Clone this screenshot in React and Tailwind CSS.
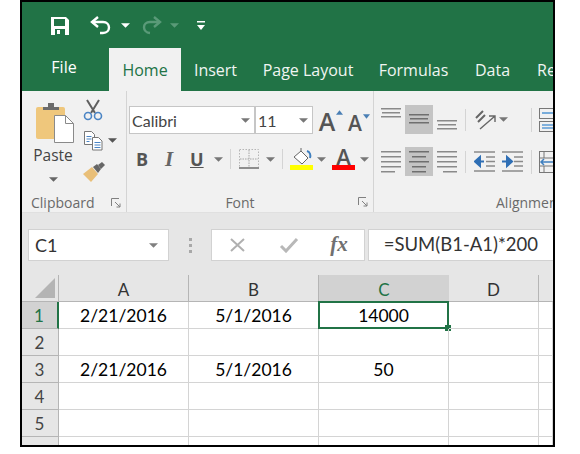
import React from "react";

const ui = "font-['Open_Sans','Noto_Sans',sans-serif]";
const cal = "font-['Lato','Noto_Sans',sans-serif]";

function Caret({ color = "#666", size = 4, className = "" }) {
  return (
    <svg width={size * 2 + 1} height={size + 1} viewBox="0 0 8 4" className={className}>
      <path d="M0 0h8L4 4z" fill={color} />
    </svg>
  );
}

function Lines({ rows, w = 20, h = 29, color = "#7f7f7f" }) {
  return (
    <svg width={w} height={h} viewBox={`0 0 ${w} ${h}`}>
      {rows.map(([x, y, l], i) => (
        <rect key={i} x={x} y={y} width={l} height="1.5" fill={color} />
      ))}
    </svg>
  );
}

function Paste() {
  return (
    <svg width="40" height="42" viewBox="0 0 40 42" className="ml-[4px]">
      <rect x="1" y="5" width="29" height="32" rx="2" fill="#efc77c" />
      <path d="M8 8V5h5V1h6v4h5v3z" fill="#6b6b6b" />
      <path d="M19.5 13.5h11l8 8v19h-19z" fill="#fff" stroke="#8a8a8a" />
      <path d="M30.5 13.5v8h8" fill="none" stroke="#8a8a8a" />
    </svg>
  );
}

function Scissors() {
  return (
    <svg width="20" height="22" viewBox="0 0 20 22" fill="none">
      <path d="M4 1l8 13M16 1L8 14" stroke="#5f5f5f" strokeWidth="2" />
      <circle cx="5" cy="17" r="3.5" stroke="#4a84c4" strokeWidth="1.6" />
      <circle cx="15" cy="17" r="3.5" stroke="#4a84c4" strokeWidth="1.6" />
    </svg>
  );
}

function Copy() {
  return (
    <svg width="20" height="21" viewBox="0 0 20 21" fill="none">
      <path d="M1.5 1.5h7l3 3v10h-10z" fill="#fff" stroke="#777" />
      <path d="M3.5 6.5h5M3.5 9h5M3.5 11.5h3" stroke="#4a84c4" />
      <path d="M9.5 7.5h6l3.5 3.5v9H9.5z" fill="#fff" stroke="#777" />
      <path d="M11.5 12.5h6M11.5 15h6M11.5 17.5h6" stroke="#4a84c4" />
    </svg>
  );
}

function Brush() {
  return (
    <svg width="22" height="20" viewBox="0 0 22 20">
      <path d="M0 12l9-7 6 7-7 8z" fill="#e9bf78" />
      <path d="M10 5l4-3 4 5-3 4z" fill="#666" />
      <path d="M15 3l4-3 3 3-4 4z" fill="#666" />
    </svg>
  );
}

function ExpandMark() {
  return (
    <svg width="10" height="10" viewBox="0 0 10 10" fill="none" stroke="#808080">
      <path d="M.5 8V.5H8" />
      <path d="M4 4l5 5M9 5.5V9H5.5" />
    </svg>
  );
}

function Sep({ h = "h-[30px]" }) {
  return <div className={`w-px ${h} bg-[#d4d4d4]`} />;
}

function Combo({ w, text }) {
  return (
    <div className={`${w} h-[28px] bg-white border border-[#c6c6c6] flex items-center justify-between pl-[2px] pr-[4px] ${cal} text-[16px] text-[#444]`}>
      <span className="pt-[1px]">{text}</span>
      <Caret color="#777" />
    </div>
  );
}

function BigA({ size, tri, up, w }) {
  return (
    <div className={`relative ${w} flex items-end justify-center ${ui} text-[#555] font-semibold leading-none`} style={{ fontSize: size }}>
      A
      <svg width="7" height="5" viewBox="0 0 8 5" className="absolute right-[-6px] top-[1px]">
        <path d={up ? "M0 5h8L4 0z" : "M0 0h8L4 5z"} fill={tri} />
      </svg>
    </div>
  );
}

function ClipboardGroup() {
  return (
    <div className="w-[104px] h-full shrink-0 flex flex-col">
      <div className="h-[101px] shrink-0 flex pl-[10px] pt-[11px]">
        <div className="w-[42px] flex flex-col items-center">
          <Paste />
          <div className={`${ui} text-[15.5px] text-[#444] leading-none mt-[4px]`}>Paste</div>
          <Caret className="mt-[13px]" color="#666" />
        </div>
        <div className="flex flex-col -mt-[3px] ml-[9px]">
          <Scissors />
          <div className="flex items-center mt-[9px]">
            <Copy />
            <Caret className="ml-[5px]" color="#555" />
          </div>
          <div className="mt-[11px]"><Brush /></div>
        </div>
      </div>
      <div className={`h-[20px] flex items-center justify-between pl-[9px] pr-[5px] pt-[1px] ${ui} text-[14px] text-[#6a6a6a]`}>
        <span>Clipboard</span>
        <ExpandMark />
      </div>
    </div>
  );
}

function FontGroup() {
  return (
    <div className="w-[247px] h-full shrink-0 flex flex-col border-l border-[#d4d4d4] pl-[2px]">
      <div className="h-[101px] shrink-0 flex flex-col pt-[15px]">
        <div className="flex items-center">
          <Combo w="w-[126px]" text="Calibri" />
          <Combo w="w-[58px]" text="11" />
          <div className="flex items-end h-[27px] ml-[4px]">
            <BigA size={25} tri="#4a7fb5" up w="w-[20px]" />
            <div className="w-[9px]" />
            <BigA size={21} tri="#4a7fb5" w="w-[18px]" />
          </div>
        </div>
        <div className="flex items-center h-[28px] mt-[11px] pl-[7px]">
          <span className={`w-[14px] ${ui} text-[18px] font-bold text-[#555] leading-none`}>B</span>
          <span className={`w-[14px] ml-[15px] font-['Liberation_Serif',serif] text-[21px] font-bold italic text-[#666] leading-none`}>I</span>
          <span className={`w-[16px] ml-[11px] ${ui} text-[18px] font-bold text-[#555] leading-none underline`}>U</span>
          <Caret className="ml-[8px]" color="#777" />
          <div className="ml-[7px]"><Sep h="h-[20px]" /></div>
          <svg width="20" height="21" viewBox="0 0 20 21" className="ml-[8px]" fill="none">
            <rect x=".5" y=".5" width="19" height="18" stroke="#b5b5b5" strokeDasharray="1.5 1.5" />
            <path d="M10 1v18M1 10h18" stroke="#a5a5a5" strokeDasharray="1.5 1" />
            <rect y="18" width="20" height="2" fill="#8f8f8f" />
          </svg>
          <Caret className="ml-[7px]" color="#777" />
          <div className="ml-[7px]"><Sep h="h-[20px]" /></div>
          <div className="ml-[7px] w-[23px] flex flex-col items-center">
            <svg width="20" height="17" viewBox="0 0 20 17" fill="none">
              <path d="M2 9l7-6 7 7-6 6z" fill="#fff" stroke="#666" />
              <path d="M9 3V0" stroke="#666" />
              <path d="M15 3c3 1 4 4 3 7" stroke="#3f7fbf" strokeWidth="2" />
            </svg>
            <div className="w-[23px] h-[5px] bg-[#ffff00]" />
          </div>
          <Caret className="ml-[4px]" color="#777" />
          <div className="ml-[6px] w-[23px] flex flex-col items-center">
            <span className={`${ui} text-[22px] h-[17px] leading-[17px] font-semibold text-[#555]`}>A</span>
            <div className="w-[23px] h-[5px] bg-[#ff0000]" />
          </div>
          <Caret className="ml-[5px]" color="#777" />
        </div>
      </div>
      <div className={`h-[20px] relative flex items-center justify-center pr-[22px] pt-[1px] ${ui} text-[14px] text-[#6a6a6a]`}>
        <span>Font</span>
        <span className="absolute right-[5px] top-[5px]"><ExpandMark /></span>
      </div>
    </div>
  );
}

function AlignBtn({ on, rows }) {
  return (
    <div className={`w-[28px] h-[29px] shrink-0 flex items-center justify-center ${on ? "bg-[#c4c4c4]" : ""}`}>
      <Lines rows={rows} color={on ? "#6f6f6f" : "#8a8a8a"} />
    </div>
  );
}

const v3 = (o) => [[0, o, 20], [1, o + 4, 18], [0, o + 8, 20]];
const left = [[0, 4, 20], [0, 9, 20], [0, 14, 20], [0, 19, 20], [0, 24, 14]];
const center = [[0, 4, 20], [3, 9, 14], [0, 14, 20], [3, 19, 14], [3, 24, 14]];
const right = [[0, 4, 20], [0, 9, 20], [0, 14, 20], [0, 19, 20], [6, 24, 14]];

function Indent({ flip }) {
  return (
    <svg width="22" height="21" viewBox="0 0 22 21" fill="none">
      <path d={flip ? "M0 10.5h6M5 6l5 4.5L5 15z" : "M10 10.5H4M6 6l-5 4.5L6 15z"} stroke="#2f6fb5" strokeWidth="2" fill="#2f6fb5" />
      <path d="M0 1h21M12 6h9M12 10.5h9M12 15h9M0 20h21" stroke="#8a8a8a" strokeWidth="1.5" />
    </svg>
  );
}

function AlignmentGroup() {
  return (
    <div className="flex-1 min-w-0 h-full flex flex-col border-l border-[#d4d4d4] overflow-hidden">
      <div className="h-[101px] shrink-0 flex flex-col pt-[14px] pl-[3px]">
        <div className="flex items-center">
          <AlignBtn rows={v3(3)} />
          <AlignBtn on rows={v3(9)} />
          <AlignBtn rows={v3(15)} />
          <div className="ml-[4px]"><Sep h="h-[22px]" /></div>
          <svg width="22" height="22" viewBox="0 0 22 22" className="ml-[9px]" fill="none">
            <path d="M1 9l7-7M3 13l7-7" stroke="#666" strokeWidth="2" />
            <path d="M5 20L20 7M14 7h6v6" stroke="#666" strokeWidth="1.4" />
          </svg>
          <Caret className="ml-[2px]" color="#777" />
          <div className="ml-[23px]"><Sep h="h-[24px]" /></div>
          <svg width="14" height="24" viewBox="0 0 14 24" className="ml-[7px]" fill="none">
            <rect x=".5" y=".5" width="14" height="10" stroke="#777" />
            <path d="M3 5h12" stroke="#5b9bd5" strokeWidth="1.6" />
            <rect x=".5" y="13.5" width="14" height="10" stroke="#777" />
            <path d="M3 17h12M3 20h12" stroke="#5b9bd5" strokeWidth="1.6" />
          </svg>
        </div>
        <div className="flex items-center mt-[13px]">
          <AlignBtn rows={left} />
          <AlignBtn on rows={center} />
          <AlignBtn rows={right} />
          <div className="ml-[4px]"><Sep h="h-[22px]" /></div>
          <div className="ml-[8px]"><Indent /></div>
          <div className="ml-[6px]"><Indent flip /></div>
          <div className="ml-[7px]"><Sep h="h-[24px]" /></div>
          <svg width="14" height="22" viewBox="0 0 14 22" className="ml-[7px]" fill="none">
            <rect x=".5" y=".5" width="16" height="21" stroke="#777" />
            <path d="M.5 7h14M.5 15h14M5 1v6M5 15v6" stroke="#777" />
            <path d="M2 11h12M5 8l-3 3 3 3" stroke="#3f7fbf" strokeWidth="1.5" />
          </svg>
        </div>
      </div>
      <div className={`h-[20px] flex items-center pl-[122px] pt-[1px] whitespace-nowrap ${ui} text-[14px] text-[#6a6a6a]`}>Alignment</div>
    </div>
  );
}

function FormulaBar() {
  return (
    <div className="h-[62px] bg-[#e6e6e6] flex pt-[16px] pl-[6px] shrink-0">
      <div className={`w-[142px] h-[32px] bg-white border border-[#d2d2d2] flex items-center justify-between pl-[6px] pr-[10px] ${cal} text-[18px] text-[#333]`}>
        <span>C1</span>
        <Caret color="#808080" />
      </div>
      <div className="w-[42px] h-[32px] flex flex-col items-center justify-center gap-[3px]">
        <div className="w-[3px] h-[3px] bg-[#a8a8a8]" />
        <div className="w-[3px] h-[3px] bg-[#a8a8a8]" />
        <div className="w-[3px] h-[3px] bg-[#a8a8a8]" />
      </div>
      <div className="w-[154px] h-[32px] bg-white border border-[#d2d2d2] flex items-center pl-[17px]">
        <svg width="17" height="14" viewBox="0 0 17 14" fill="none" stroke="#b0b0b0" strokeWidth="2">
          <path d="M2 1l13 12M15 1L2 13" />
        </svg>
        <svg width="20" height="16" viewBox="0 0 20 16" fill="none" stroke="#b8b8b8" strokeWidth="3" className="ml-[33px]">
          <path d="M2 9l5 5L18 2" />
        </svg>
        <span className="ml-[31px] font-['Liberation_Serif',serif] italic font-bold text-[21px] text-[#707070]">fx</span>
      </div>
      <div className={`w-[186px] h-[32px] ml-[3px] bg-white border-y border-l border-[#d2d2d2] flex items-center pl-[15px] ${cal} text-[18.5px] text-[#333] whitespace-nowrap`}>
        =SUM(B1-A1)*200
      </div>
    </div>
  );
}

const cols = ["A", "B", "C", "D", ""];
const rowData = {
  1: ["2/21/2016", "5/1/2016", "14000", "", ""],
  2: ["", "", "", "", ""],
  3: ["2/21/2016", "5/1/2016", "50", "", ""],
  4: ["", "", "", "", ""],
  5: ["", "", "", "", ""],
};

function Grid() {
  return (
    <div className="flex-1 min-h-0 overflow-hidden grid grid-cols-[37px_130px_130px_130px_90px_14px] auto-rows-[27px] bg-white">
      <div className="bg-[#e6e6e6] border-r border-b border-[#b5b5b5] flex items-end justify-end pr-[3px] pb-[3px]">
        <svg width="20" height="20" viewBox="0 0 20 20"><path d="M20 0v20H0z" fill="#b4b4b4" /></svg>
      </div>
      {cols.map((c, i) => (
        <div
          key={i}
          className={`flex items-center justify-center pt-[4px] border-b ${cal} text-[17px] ${
            c === "C" ? "bg-[#d2d2d2] text-[#217346] border-[#217346]" : "bg-[#e6e6e6] text-[#333] border-[#b5b5b5]"
          } ${c && c !== "C" ? "border-r border-r-[#b5b5b5]" : ""}`}
        >
          {c}
        </div>
      ))}
      {[1, 2, 3, 4, 5].map((r) => (
        <React.Fragment key={r}>
          <div
            className={`flex items-center justify-center pr-[1px] pt-[2px] ${cal} text-[17px] border-b ${
              r === 1
                ? "bg-[#d2d2d2] text-[#217346] border-r-2 border-r-[#217346] border-b-[#b5b5b5]"
                : "bg-[#e6e6e6] text-[#444] border-r border-[#b5b5b5]"
            }`}
          >
            {r}
          </div>
          {rowData[r].map((v, i) => (
            <div
              key={i}
              className={`relative flex items-center justify-center pt-[3px] ${cal} text-[17.5px] text-black border-b border-r border-[#d4d4d4]`}
            >
              {v}
              {r === 1 && i === 2 && (
                <>
                  <div className="absolute left-[-1px] top-[-1px] right-[-1px] bottom-[-1px] border-2 border-[#217346]" />
                  <div className="absolute right-[-3px] bottom-[-3px] w-[6px] h-[6px] bg-[#217346]" />
                </>
              )}
            </div>
          ))}
        </React.Fragment>
      ))}
      <div className="bg-[#e6e6e6] border-r border-[#b5b5b5]" />
      {cols.map((_, i) => <div key={i} className="border-r border-[#d4d4d4]" />)}
    </div>
  );
}

function Tab({ children, w, active, up, start }) {
  return (
    <div
      className={`${w} h-[43px] shrink-0 flex ${start ? "justify-start pl-[13px]" : "justify-center"} whitespace-nowrap ${ui} text-[16px] ${
        active ? "bg-[#f1f1f1] text-[#217346] pt-[10px]" : up ? "text-white pt-[7px]" : "text-[#f0f5f2] pt-[10px]"
      }`}
    >
      {children}
    </div>
  );
}

export default function App() {
  return (
    <div className="w-[580px] h-[454px] bg-white overflow-hidden">
      <div className="ml-[20px] w-[535px] h-[447px] border-2 border-black flex flex-col overflow-hidden">
        <div className="h-[46px] bg-[#217346] flex items-center pl-[29px] pt-[1px] shrink-0">
          <svg width="18" height="18" viewBox="0 0 18 18">
            <path d="M0 0h15l3 3v15H0z" fill="#fff" />
            <rect x="3" y="2" width="11" height="7" fill="#217346" />
            <rect x="4" y="12" width="10" height="6" fill="#217346" />
            <rect x="6" y="13" width="3" height="4" fill="#fff" />
          </svg>
          <svg width="22" height="20" viewBox="0 0 22 20" fill="none" stroke="#fff" strokeWidth="2.4" className="ml-[21px]">
            <path d="M8 1L2 6l6 5" />
            <path d="M2 6h11c8 0 8 11 0 11h-3" />
          </svg>
          <Caret color="#fff" className="ml-[9px]" />
          <svg width="21" height="20" viewBox="0 0 21 20" fill="none" stroke="#5a9a78" strokeWidth="2.4" className="ml-[11px]">
            <path d="M13 1l6 5-6 5" />
            <path d="M19 6H9c-8 0-8 10 0 11" />
          </svg>
          <Caret color="#5a9a78" className="ml-[8px]" />
          <svg width="8" height="9" viewBox="0 0 8 9" className="ml-[18px]" fill="#fff">
            <rect width="8" height="1.5" />
            <path d="M0 4h8L4 9z" />
          </svg>
        </div>
        <div className="h-[43px] bg-[#217346] flex pl-[29px] overflow-hidden shrink-0">
          <div className="w-[58px] shrink-0"><Tab w="w-[26px]" up>File</Tab></div>
          <Tab w="w-[72px]" active>Home</Tab>
          <Tab w="w-[69px]">Insert</Tab>
          <Tab w="w-[116px]">Page Layout</Tab>
          <Tab w="w-[95px]">Formulas</Tab>
          <Tab w="w-[63px]">Data</Tab>
          <Tab w="w-[40px]" start>Re</Tab>
        </div>
        <div className="h-[122px] bg-[#f1f1f1] flex shrink-0 border-b border-[#e0e0e0]">
          <ClipboardGroup />
          <FontGroup />
          <AlignmentGroup />
        </div>
        <FormulaBar />
        <Grid />
      </div>
    </div>
  );
}
